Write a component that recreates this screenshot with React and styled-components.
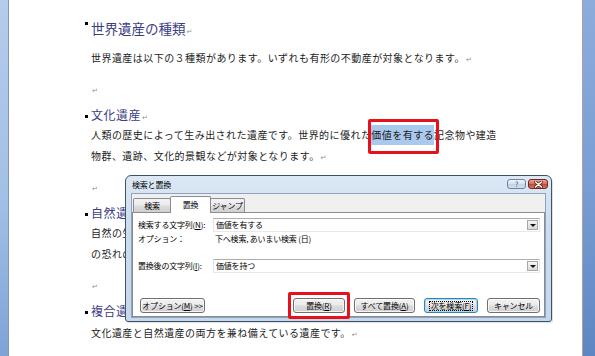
import React from 'react';
import styled, { createGlobalStyle } from 'styled-components';

const GlobalStyle = createGlobalStyle`
  *, *::before, *::after { box-sizing: border-box; }
  html, body { margin: 0; padding: 0; }
  body {
    width: 595px;
    height: 356px;
    overflow: hidden;
    font-family: "Noto Sans CJK JP", "Noto Sans", sans-serif;
  }
`;

const Screen = styled.div`
  position: relative;
  display: flex;
  width: 595px;
  height: 356px;
  overflow: hidden;
`;

const LeftGutter = styled.div`
  flex: none;
  width: 9px;
  background: linear-gradient(180deg, #b4cced 0%, #a3c0e7 55%, #7ea3d7 100%);
  border-right: 1px solid #8798ae;
`;

const RightGutter = styled.div`
  flex: none;
  width: 13px;
  background: linear-gradient(180deg, #8cacdc 0%, #7a9fd5 50%, #5e86c2 100%);
  border-left: 1px solid #a4a4a4;
`;

const Page = styled.div`
  flex: 1;
  background: #fff;
  padding: 14px 0 0 82px;
`;

const Heading = styled.div`
  height: ${p => (p.$main ? 28 : 18)}px;
  line-height: ${p => (p.$main ? 28 : 18)}px;
  margin-bottom: ${p => (p.$main ? 5 : 0)}px;
  font-size: ${p => (p.$main ? '13.5px' : '12px')};
  letter-spacing: ${p => (p.$main ? '0' : '0.5px')};
  color: #3b3d84;
  white-space: nowrap;
`;

const Bullet = styled.span`
  display: inline-block;
  width: 3px;
  height: 3px;
  background: #000;
  margin-left: -6px;
  margin-right: 3px;
  vertical-align: ${p => (p.$top ? 'top' : 'middle')};
  margin-top: ${p => (p.$top ? 8 : 0)}px;
`;

const Para = styled.p`
  width: 412px;
  margin: ${p => p.$before || 0}px 0 ${p => (p.$empty ? 7 : 10)}px;
  font-size: 10px;
  letter-spacing: 0.45px;
  line-height: 21px;
  color: #1d1d1d;
`;

const Mark = styled.span`
  font-family: "DejaVu Sans", sans-serif;
  font-size: 7px;
  line-height: 0;
  letter-spacing: 0;
  color: #8e8e8e;
  margin-left: 1px;
`;

const Highlight = styled.span`
  position: relative;
  background: #aac9ee;
  padding: 2px 0 2.5px;

  &::after {
    content: '';
    position: absolute;
    top: -6px;
    bottom: -9px;
    left: -3px;
    right: -5px;
    border: 3px solid #e5121b;
    border-radius: 2px;
  }
`;

/* dialog */

const Window = styled.div`
  position: absolute;
  left: 125px;
  top: 175px;
  width: 427px;
  border: 1px solid #3d5368;
  border-radius: 6px 6px 3px 3px;
  background: linear-gradient(180deg, #dce8f5 0%, #cddcef 35%, #c6d8ec 100%);
  box-shadow: 1px 1px 0 rgba(0, 0, 0, 0.12);
  font-family: "Noto Sans CJK JP", sans-serif;
  font-size: 8px;
  letter-spacing: -0.2px;
  color: #000;
`;

const TitleBar = styled.div`
  display: flex;
  justify-content: space-between;
  align-items: flex-start;
  height: 17px;
  padding: 0 3px 0 6px;
`;

const Title = styled.span`
  line-height: 17px;
`;

const Captions = styled.div`
  display: flex;
  gap: 2px;
  margin-top: 3px;
`;

const CaptionButton = styled.div`
  display: flex;
  align-items: center;
  justify-content: center;
  width: ${p => p.$w}px;
  height: 10px;
  border: 1px solid ${p => (p.$close ? '#6a2b20' : '#6f8299')};
  border-radius: 3px;
  background: ${p =>
    p.$close
      ? 'linear-gradient(180deg, #e9a89a 0%, #d5735f 45%, #c24a34 55%, #d27a62 100%)'
      : 'linear-gradient(180deg, #eef3fa 0%, #d8e3f1 45%, #c2d3e9 55%, #d3e0f0 100%)'};
  font-size: 7px;
  line-height: 1;
  color: #45566c;
`;

const Client = styled.div`
  margin: 0 5px 3px;
  border: 1px solid #8ea2bb;
  background: #f0f0f0;
  padding-top: 2px;
`;

const TabStrip = styled.div`
  display: flex;
  align-items: flex-end;
  height: 16px;
  padding-left: 1px;
`;

const Tab = styled.div`
  position: relative;
  z-index: ${p => (p.$active ? 1 : 0)};
  width: ${p => p.$w}px;
  height: ${p => (p.$active ? 17 : 14)}px;
  margin-bottom: ${p => (p.$active ? -1 : 0)}px;
  margin-left: ${p => (p.$first ? 0 : -1)}px;
  border: 1px solid #898c95;
  border-bottom: none;
  border-radius: 2px 2px 0 0;
  background: ${p =>
    p.$active
      ? '#fff'
      : 'linear-gradient(180deg, #f3f3f3 0%, #ebebeb 48%, #dddddd 52%, #d0d0d0 100%)'};
  display: flex;
  align-items: center;
  justify-content: center;
  white-space: nowrap;
  line-height: 1;
`;

const Panel = styled.div`
  background: #fff;
  border: 1px solid #898c95;
  padding: 5px 4px 3px 5px;
`;

const Row = styled.div`
  display: grid;
  grid-template-columns: 75px 1fr;
  align-items: center;
  height: ${p => p.$h || 14}px;
  margin-top: ${p => p.$mt || 0}px;
`;

const Label = styled.span`
  white-space: nowrap;
  line-height: 1;
`;

const Value = styled.span`
  padding-left: 2px;
  line-height: 1;
  white-space: nowrap;
`;

const Combo = styled.div`
  display: flex;
  align-items: center;
  justify-content: space-between;
  height: 14px;
  border: 1px solid #abadb3;
  border-color: #abadb3 #e3e9ef #e3e9ef #e2e3ea;
  background: #fff;
  padding: 0 1px 0 2px;
  line-height: 1;
`;

const DropButton = styled.div`
  display: flex;
  align-items: center;
  justify-content: center;
  width: 11px;
  height: 10px;
  border: 1px solid #a7a7a7;
  background: linear-gradient(180deg, #f6f6f6 0%, #dadada 100%);

  &::before {
    content: '';
    border-left: 3px solid transparent;
    border-right: 3px solid transparent;
    border-top: 3px solid #111;
  }
`;

const ButtonRow = styled.div`
  display: flex;
  justify-content: space-between;
  align-items: center;
  margin-top: 25px;
  padding-left: 2px;
`;

const ButtonGroup = styled.div`
  display: flex;
  gap: 9px;
`;

const Button = styled.div`
  display: flex;
  align-items: center;
  justify-content: center;
  width: ${p => p.$w}px;
  height: 15px;
  border: 1px solid ${p => (p.$default ? '#3c7fb1' : '#707070')};
  border-radius: 3px;
  background: linear-gradient(180deg, #f2f2f2 0%, #ebebeb 45%, #dddddd 52%, #cfcfcf 100%);
  box-shadow: inset 0 0 0 1px ${p => (p.$default ? '#9ce0f7' : 'rgba(255,255,255,0.75)')};
  line-height: 1;
  white-space: nowrap;
`;

const FocusText = styled.span`
  outline: 1px dotted #000;
  outline-offset: 0;
  padding: 0 1px;
`;

const Marked = styled.div`
  position: relative;

  &::after {
    content: '';
    position: absolute;
    top: -6px;
    bottom: -6px;
    left: -5px;
    right: -5px;
    border: 3px solid #e5121b;
    border-radius: 2px;
  }
`;

const CloseGlyph = () => (
  <svg width="9" height="7" viewBox="0 0 9 7">
    <path d="M1.5 1 L7.5 6 M7.5 1 L1.5 6" stroke="#5e2117" strokeWidth="3" strokeLinecap="round" />
    <path d="M1.5 1 L7.5 6 M7.5 1 L1.5 6" stroke="#fff" strokeWidth="1.6" strokeLinecap="round" />
  </svg>
);

const FindReplaceDialog = () => (
  <Window>
    <TitleBar>
      <Title>検索と置換</Title>
      <Captions>
        <CaptionButton $w={19}>?</CaptionButton>
        <CaptionButton $w={20} $close>
          <CloseGlyph />
        </CaptionButton>
      </Captions>
    </TitleBar>
    <Client>
      <TabStrip>
        <Tab $w={38} $first>検索</Tab>
        <Tab $w={41} $active>置換</Tab>
        <Tab $w={35}>ジャンプ</Tab>
      </TabStrip>
      <Panel>
        <Row>
          <Label>検索する文字列(<u>N</u>):</Label>
          <Combo>
            <span>価値を有する</span>
            <DropButton />
          </Combo>
        </Row>
        <Row $h={12} $mt={1}>
          <Label>オプション：</Label>
          <Value>下へ検索, あいまい検索 (日)</Value>
        </Row>
        <Row $mt={14}>
          <Label>置換後の文字列(<u>I</u>):</Label>
          <Combo>
            <span>価値を持つ</span>
            <DropButton />
          </Combo>
        </Row>
        <ButtonRow>
          <Button $w={65}>オプション(<u>M</u>) &gt;&gt;</Button>
          <ButtonGroup>
            <Marked>
              <Button $w={52}>置換(<u>R</u>)</Button>
            </Marked>
            <Button $w={61}>すべて置換(<u>A</u>)</Button>
            <Button $w={54} $default>
              <FocusText>次を検索(<u>F</u>)</FocusText>
            </Button>
            <Button $w={53}>キャンセル</Button>
          </ButtonGroup>
        </ButtonRow>
      </Panel>
    </Client>
  </Window>
);

export default function App() {
  return (
    <>
      <GlobalStyle />
      <Screen>
        <LeftGutter />
        <Page>
          <Heading $main>
            <Bullet $top />世界遺産の種類<Mark>↵</Mark>
          </Heading>
          <Para>
            世界遺産は以下の３種類があります。いずれも有形の不動産が対象となります。<Mark>↵</Mark>
          </Para>
          <Para $empty><Mark>↵</Mark></Para>

          <Heading>
            <Bullet />文化遺産<Mark>↵</Mark>
          </Heading>
          <Para>
            人類の歴史によって生み出された遺産です。世界的に優れた<Highlight>価値を有する</Highlight>記念物や建造物群、遺跡、文化的景観などが対象となります。<Mark>↵</Mark>
          </Para>
          <Para $empty><Mark>↵</Mark></Para>

          <Heading>
            <Bullet />自然遺産<Mark>↵</Mark>
          </Heading>
          <Para>
            自然の生態系や地形・地質、景観などのうち顕著な普遍的価値を持つもの、および絶滅の恐れのある動植物の生息地などが対象となります。<Mark>↵</Mark>
          </Para>
          <Para $empty><Mark>↵</Mark></Para>

          <Heading>
            <Bullet />複合遺産<Mark>↵</Mark>
          </Heading>
          <Para $before={2}>
            文化遺産と自然遺産の両方を兼ね備えている遺産です。<Mark>↵</Mark>
          </Para>
        </Page>
        <RightGutter />
        <FindReplaceDialog />
      </Screen>
    </>
  );
}
